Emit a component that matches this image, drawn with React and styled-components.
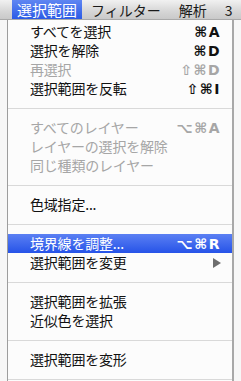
import React from "react";
import styled, { createGlobalStyle } from "styled-components";

const GlobalStyle = createGlobalStyle`
	html, body {
		margin: 0;
		padding: 0;
		background: #f6f6f6;
	}
	body {
		font-family: "Noto Sans CJK JP", "Noto Sans", sans-serif;
	}
`;

const menuTitles = [
	{ label: "選択範囲", active: true },
	{ label: "フィルター" },
	{ label: "解析" },
	{ label: "3" },
];

const items = [
	{ label: "すべてを選択", keys: "⌘A" },
	{ label: "選択を解除", keys: "⌘D" },
	{ label: "再選択", keys: "⇧⌘D", disabled: true },
	{ label: "選択範囲を反転", keys: "⇧⌘I" },
	{ separator: true },
	{ label: "すべてのレイヤー", keys: "⌥⌘A", disabled: true },
	{ label: "レイヤーの選択を解除", disabled: true },
	{ label: "同じ種類のレイヤー", disabled: true },
	{ separator: true },
	{ label: "色域指定..." },
	{ separator: true },
	{ label: "境界線を調整...", keys: "⌥⌘R", highlighted: true },
	{ label: "選択範囲を変更", submenu: true },
	{ separator: true },
	{ label: "選択範囲を拡張" },
	{ label: "近似色を選択" },
	{ separator: true },
	{ label: "選択範囲を変形" },
	{ separator: true },
];

function App() {
	return (
		<>
			<GlobalStyle />
			<Screen>
				<MenuBar>
					{menuTitles.map((m) => (
						<MenuTitle key={m.label} $active={m.active}>
							{m.label}
						</MenuTitle>
					))}
				</MenuBar>
				<Body>
					<Gutter />
					<Panel>
						{items.map((item, i) =>
							item.separator ? (
								<Separator key={i} />
							) : (
								<Item
									key={i}
									$disabled={item.disabled}
									$highlighted={item.highlighted}
								>
									<Label>{item.label}</Label>
									{item.keys && <Keys>{item.keys}</Keys>}
									{item.submenu && <Arrow />}
								</Item>
							)
						)}
					</Panel>
					<Gutter />
				</Body>
			</Screen>
		</>
	);
}

export default App;

const Screen = styled.div`
	width: 241px;
	height: 381px;
	overflow: hidden;
	display: flex;
	flex-direction: column;
`;

const MenuBar = styled.div`
	height: 20px;
	flex-shrink: 0;
	display: flex;
	align-items: stretch;
	padding-left: 12px;
	overflow: hidden;
	background: linear-gradient(#f1f1f1, #d6d6d6 60%, #c9c9c9);
	border-bottom: 1px solid #a9a9a9;
	box-sizing: border-box;
`;

const MenuTitle = styled.div`
	flex-shrink: 0;
	display: flex;
	align-items: center;
	padding: ${(p) => (p.$active ? "0 5px" : "0 9px")};
	font-size: ${(p) => (p.$active ? "15px" : "14px")};
	line-height: 20px;
	white-space: nowrap;
	color: ${(p) => (p.$active ? "#ffffff" : "#1a1a1a")};
	background: ${(p) =>
		p.$active ? "linear-gradient(#5f86f2, #2b5be6)" : "transparent"};
`;

const Body = styled.div`
	flex: 1;
	display: flex;
	min-height: 0;
`;

const Gutter = styled.div`
	flex: 1;
	background: #f7f7f7;
`;

const Panel = styled.div`
	width: 224px;
	flex-shrink: 0;
	padding-top: 2px;
	background: rgba(252, 252, 252, 0.97);
	border-left: 1px solid #9d9d9d;
	border-right: 2px solid #a8a8a8;
	display: flex;
	flex-direction: column;
`;

const Item = styled.div`
	height: 19px;
	flex-shrink: 0;
	display: flex;
	align-items: center;
	padding: 0 11px 0 22px;
	font-size: 14px;
	color: ${(p) =>
		p.$highlighted ? "#ffffff" : p.$disabled ? "#a6a6a6" : "#111111"};
	background: ${(p) =>
		p.$highlighted ? "linear-gradient(#5b80f3, #2653e8)" : "transparent"};
`;

const Label = styled.span`
	flex: 1;
	white-space: nowrap;
	line-height: 19px;
	letter-spacing: -0.2px;
`;

const Keys = styled.span`
	font-family: "DejaVu Sans", "Liberation Sans", sans-serif;
	font-size: 14px;
	font-weight: bold;
	letter-spacing: 1.5px;
	white-space: nowrap;
`;

const Arrow = styled.span`
	width: 0;
	height: 0;
	margin-right: 0;
	border-top: 5px solid transparent;
	border-bottom: 5px solid transparent;
	border-left: 8px solid #6e6e6e;
`;

const Separator = styled.div`
	height: 20px;
	flex-shrink: 0;
	display: flex;
	align-items: center;

	&::after {
		content: "";
		flex: 1;
		height: 1px;
		background: #d9d9d9;
	}
`;
